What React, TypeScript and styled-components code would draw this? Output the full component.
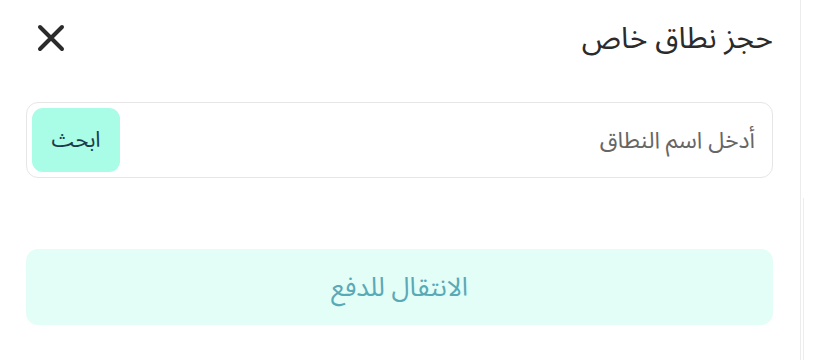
import styled, { createGlobalStyle } from "styled-components";

const GlobalStyle = createGlobalStyle`
  html, body {
    margin: 0;
    padding: 0;
    background: #ffffff;
  }
  body {
    font-family: "Noto Sans Arabic", "Noto Sans", "DejaVu Sans", sans-serif;
  }
`;

const CloseIcon = () => (
  <svg width="30" height="30" viewBox="0 0 30 30" fill="none">
    <path
      d="M4 4 L26 26 M26 4 L4 26"
      stroke="#2b2b2b"
      strokeWidth="4"
      strokeLinecap="round"
    />
  </svg>
);

export default function App() {
  return (
    <>
      <GlobalStyle />
      <Page>
        <Panel dir="rtl">
          <Header>
            <Title>حجز نطاق خاص</Title>
            <CloseButton aria-label="close">
              <CloseIcon />
            </CloseButton>
          </Header>

          <SearchBox>
            <SearchInput placeholder="أدخل اسم النطاق" />
            <SearchButton>ابحث</SearchButton>
          </SearchBox>

          <PayButton>الانتقال للدفع</PayButton>
        </Panel>
        <SideStrip>
          <SideInner />
        </SideStrip>
      </Page>
    </>
  );
}

const Page = styled.div`
  display: flex;
  width: 816px;
  height: 360px;
  overflow: hidden;
  background: #ffffff;
`;

const Panel = styled.section`
  width: 800px;
  box-sizing: border-box;
  padding: 12px 27px 0 26px;
  display: flex;
  flex-direction: column;
`;

const Header = styled.header`
  display: flex;
  align-items: center;
  justify-content: space-between;
  height: 52px;
`;

const Title = styled.h2`
  margin: 0;
  font-size: 30px;
  font-weight: 400;
  color: #2b2b2b;
`;

const CloseButton = styled.button`
  border: none;
  background: transparent;
  padding: 0;
  margin-left: 10px;
  display: flex;
  cursor: pointer;
`;

const SearchBox = styled.div`
  margin-top: 38px;
  height: 76px;
  box-sizing: border-box;
  border: 1px solid #e6e6e6;
  border-radius: 12px;
  padding: 5px;
  display: flex;
  align-items: stretch;
  gap: 10px;
`;

const SearchInput = styled.input`
  flex: 1;
  border: none;
  outline: none;
  background: transparent;
  padding: 0 12px 0 0;
  font-family: inherit;
  font-size: 23px;
  color: #333;
  &::placeholder {
    color: #666666;
  }
`;

const SearchButton = styled.button`
  width: 88px;
  border: none;
  border-radius: 11px;
  background: #a9fce6;
  color: #1b3a4a;
  font-family: inherit;
  font-size: 22px;
  cursor: pointer;
`;

const PayButton = styled.button`
  margin-top: 71px;
  height: 76px;
  border: none;
  border-radius: 12px;
  background: #e3fdf7;
  color: #5aa9b6;
  font-family: inherit;
  font-size: 26px;
  cursor: pointer;
`;

const SideStrip = styled.aside`
  flex: 1;
  border-left: 1px solid #ececec;
  padding-top: 198px;
  padding-left: 2px;
`;

const SideInner = styled.div`
  height: 100%;
  border-left: 1px solid #ededed;
`;
